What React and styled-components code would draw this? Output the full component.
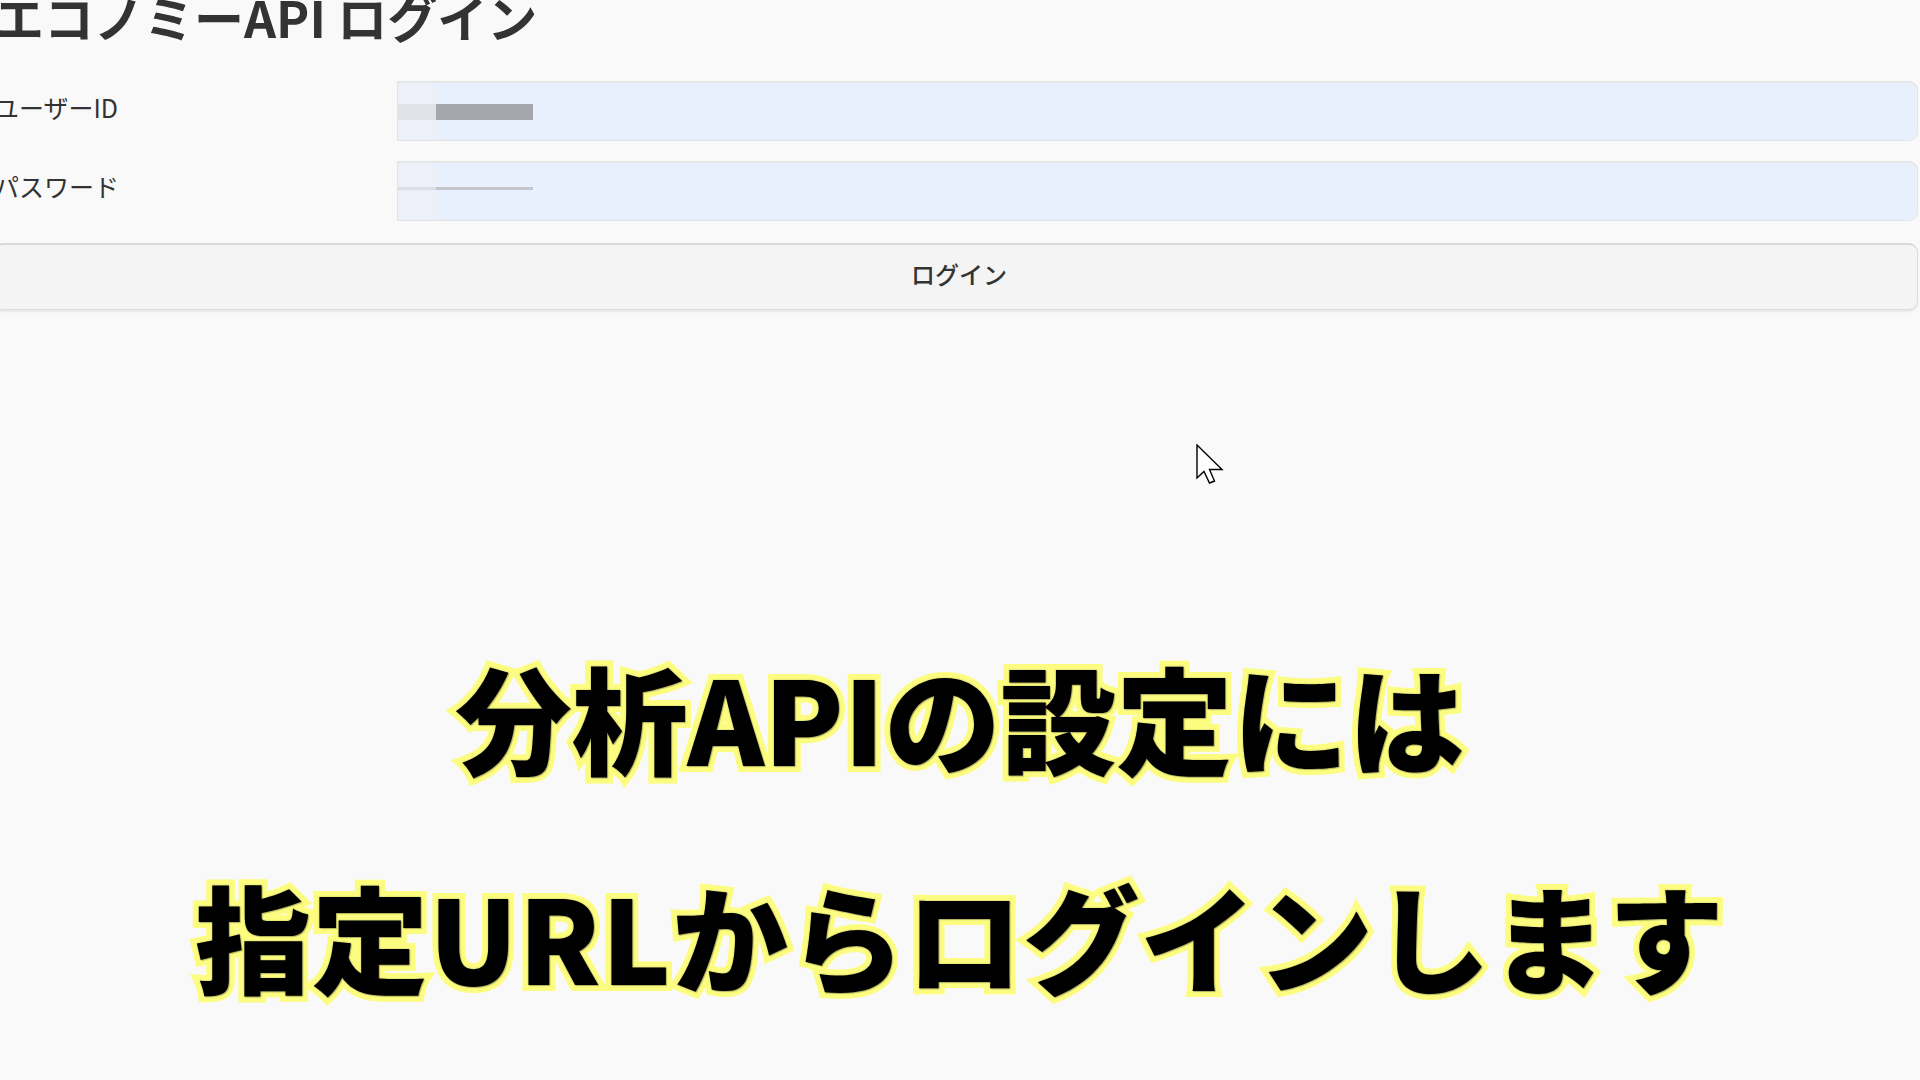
import React from "react";
import styled, { createGlobalStyle } from "styled-components";

const Global = createGlobalStyle`
  html, body { margin: 0; padding: 0; background: #f9f9f9; overflow: hidden; }
  * { box-sizing: border-box; }
`;

const Page = styled.div`
  position: relative;
  width: 1920px;
  height: 1080px;
  overflow: hidden;
  background: #f9f9f9;
  font-family: "Noto Sans CJK JP", "Noto Sans", sans-serif;
  color: #333;
`;

const Form = styled.div`
  margin-left: -6px;
  width: 1924px;
  display: flex;
  flex-direction: column;
`;

const Title = styled.h1`
  margin: -8px 0 0 0;
  font-size: 50px;
  line-height: 48px;
  font-weight: 700;
  color: #333;
  letter-spacing: 0;
`;

const Fields = styled.div`
  margin-top: 41px;
  display: grid;
  grid-template-columns: 403px 1fr;
  grid-auto-rows: 60px;
  row-gap: 20px;
  align-items: center;
`;

const Label = styled.label`
  font-size: 25px;
  color: #333;
  line-height: 1;
  margin-top: ${(p) => p.$offset || 0}px;
`;

const Field = styled.div`
  height: 60px;
  border-radius: 0 9px 9px 0;
  border: 1px solid #e3e3e6;
  border-top: 2px solid #e6e6e8;
  background: linear-gradient(to right, #edf0f9 0 38px, #e8f0fe 38px);
  display: flex;
  align-items: center;
`;

const Mask = styled.div`
  width: 135px;
  height: ${(p) => p.$h}px;
  margin-top: ${(p) => p.$top}px;
  background: linear-gradient(
    to right,
    ${(p) => p.$light} 0 38px,
    ${(p) => p.$dark} 38px
  );
`;

const Button = styled.button`
  margin-top: 22px;
  height: 67px;
  width: 100%;
  border: 1px solid #dcdcdc;
  border-top: 2px solid #d9d9d9;
  border-radius: 9px;
  background: #f4f4f4;
  box-shadow: 0 2px 2px rgba(0, 0, 0, 0.07);
  font-family: "Noto Sans CJK JP", "Noto Sans", sans-serif;
  font-size: 24px;
  font-weight: 500;
  color: #333;
  padding: 0 0 7px 6px;
`;

const Caption = styled.div`
  margin-top: 296px;
  text-align: center;
  font-family: "Noto Sans CJK JP", sans-serif;
  font-weight: 900;
  font-size: 116px;
  line-height: 219px;
  color: #000;
  -webkit-text-stroke: 12px #fcfc80;
  paint-order: stroke fill;
  text-shadow: 0 0 1.5px rgba(90, 90, 60, 0.6), 1px 1px 1px rgba(0, 0, 0, 0.25);
`;

const Line = styled.div`
  white-space: nowrap;
  letter-spacing: ${(p) => p.$ls || 0}px;
`;

const Cursor = styled.svg`
  position: absolute;
  left: 1196px;
  top: 444px;
`;

export default function App() {
  return (
    <Page>
      <Global />
      <Form>
        <Title>エコノミーAPI ログイン</Title>
        <Fields>
          <Label $offset={-7}>ユーザーID</Label>
          <Field>
            <Mask $h={16} $top={0} $light="#e2e3ea" $dark="#a5a7ae" />
          </Field>
          <Label $offset={-10}>パスワード</Label>
          <Field>
            <Mask $h={3} $top={-6} $light="#dcdde3" $dark="#c4c6cd" />
          </Field>
        </Fields>
        <Button>ログイン</Button>
      </Form>
      <Caption>
        <Line>分析APIの設定には</Line>
        <Line $ls={1}>指定URLからログインします</Line>
      </Caption>
      <Cursor width="30" height="42" viewBox="0 0 30 42">
        <polygon
          points="1,1 1,34 8,27.5 13.5,39 18.5,37 13.5,25.5 26,25.5"
          fill="#fff"
          stroke="#000"
          strokeWidth="1.4"
          strokeLinejoin="miter"
        />
      </Cursor>
    </Page>
  );
}
